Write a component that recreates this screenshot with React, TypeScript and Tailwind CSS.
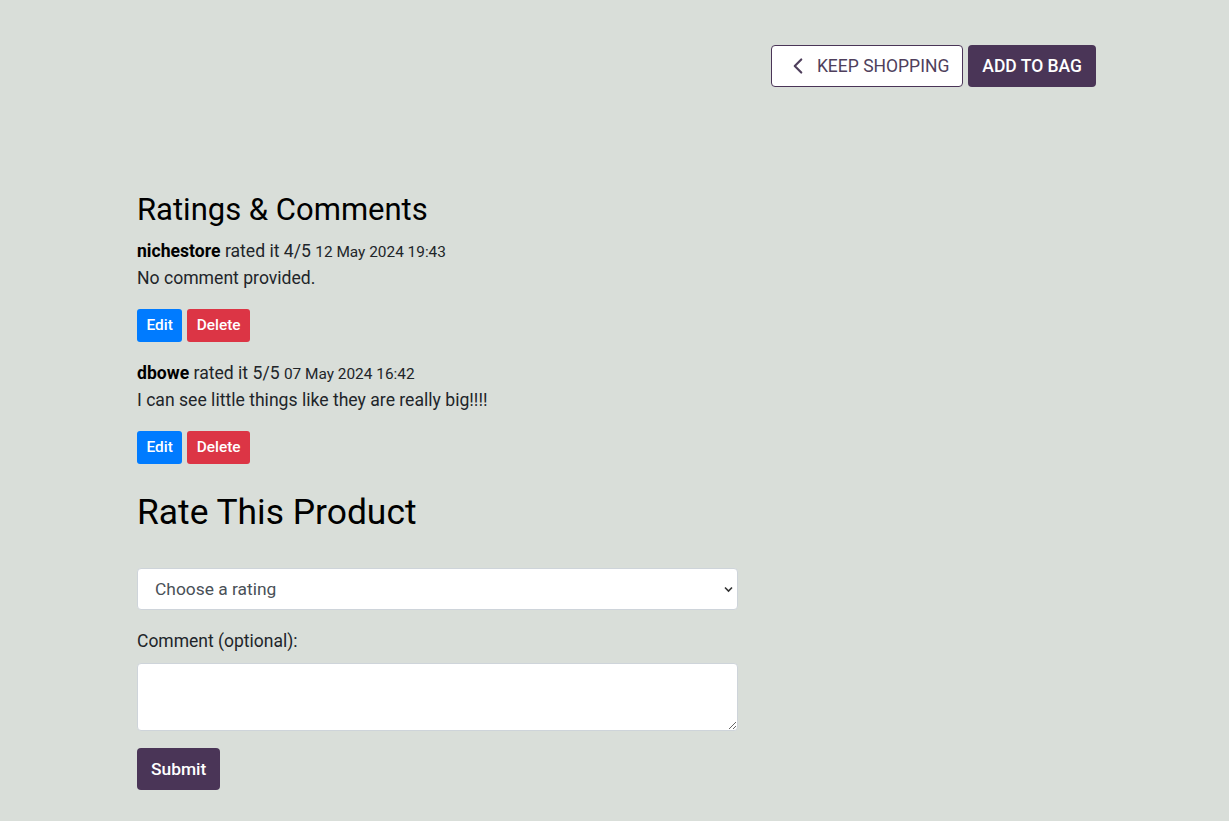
import { ChevronLeft } from "lucide-react";

const comments = [
  { user: "nichestore", rating: 4, date: "12 May 2024 19:43", text: "No comment provided." },
  { user: "dbowe", rating: 5, date: "07 May 2024 16:42", text: "I can see little things like they are really big!!!!" },
];

export default function App() {
  return (
    <div className="min-h-[821px] bg-[#d9ded9] font-['Roboto',sans-serif] text-[#212529]">
      <div className="ml-[137px] w-[959px] pt-[45px]">
        <div className="flex justify-end gap-[5px]">
          <button className="flex h-[42px] items-center gap-[6px] rounded-[4px] border border-[#4a3557] bg-white pl-[13px] pr-[13px] text-[17.5px] text-[#4f3f5c]">
            <ChevronLeft size={26} strokeWidth={2} />
            KEEP SHOPPING
          </button>
          <button className="h-[42px] rounded-[4px] bg-[#4a3557] px-[14px] text-[17.5px] font-medium text-white">
            ADD TO BAG
          </button>
        </div>

        <div className="mt-[104px] w-[601px]">
          <h3 className="text-[31px] leading-[1.2] font-normal text-black">Ratings &amp; Comments</h3>
          <div className="mt-[10px] flex flex-col gap-[18px]">
            {comments.map((c) => (
              <div key={c.user}>
                <p className="text-[17.6px] leading-[26px]">
                  <strong className="font-bold text-black">{c.user}</strong> rated it {c.rating}/5{" "}
                  <small className="text-[15.4px]">{c.date}</small>
                </p>
                <p className="text-[17.6px] leading-[26px]">{c.text}</p>
                <div className="mt-[18px] flex gap-[5px]">
                  <button className="h-[33px] rounded-[3px] bg-[#007bff] px-[9.5px] text-[15.4px] font-medium text-white">
                    Edit
                  </button>
                  <button className="h-[33px] rounded-[3px] bg-[#dc3545] px-[9.5px] text-[15.4px] font-medium text-white">
                    Delete
                  </button>
                </div>
              </div>
            ))}
          </div>

          <h2 className="mt-[27px] text-[35.4px] leading-[1.2] font-normal text-black">Rate This Product</h2>
          <form className="mt-[34px]">
            <div className="relative">
              <select className="h-[42px] w-full appearance-none rounded-[4px] border border-[#ced4da] bg-white px-[17px] text-[17.4px] text-[#495057] outline-none">
                <option>Choose a rating</option>
              </select>
              <svg className="pointer-events-none absolute right-[5px] top-[18px]" width="9" height="7" viewBox="0 0 9 7">
                <path d="M1 1.5 L4.5 5 L8 1.5" fill="none" stroke="#333" strokeWidth="1.6" />
              </svg>
            </div>
            <label className="mt-[19px] block text-[17.5px] leading-[24px]">Comment (optional):</label>
            <textarea className="mt-[10px] block h-[68px] w-full rounded-[4px] border border-[#ced4da] bg-white px-3 py-2 outline-none" />
            <button type="button" className="mt-[17px] h-[42px] rounded-[4px] bg-[#4a3557] px-[14px] text-[17.4px] font-medium text-white">
              Submit
            </button>
          </form>
        </div>
      </div>
    </div>
  );
}
